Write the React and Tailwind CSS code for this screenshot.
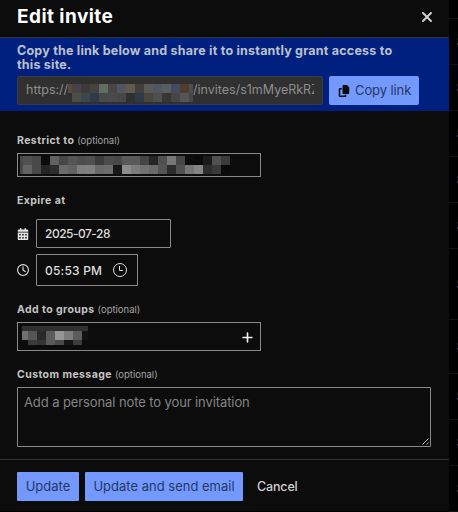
import { FaCalendarDays, FaCopy, FaPlus, FaRegClock, FaXmark } from "react-icons/fa6";

const linkTiles = [
  ["#5a4838", "#454545", "#3f3a39", "#44433f", "#616c63", "#494543", "#50555f", "#605a4e", "#423e3c", "#585b54", "#52565e", "#566062", "#434c5d", "#533b2d", "#4d4e4e"],
  ["#303030", "#4a4f43", "#3b464d", "#2e3a49", "#484949", "#494a4a", "#474747", "#302f2f", "#2e3a48", "#49463c", "#4c5051", "#3a3432", "#464646", "#555556", "#464646"],
];

const restrictTiles = [
  ["#484848", "#515151", "#484848", "#0b0b0b", "#606060", "#474747", "#555555", "#4d4d4d", "#505050", "#3c3c3c", "#4c4c4c", "#484848", "#5a5a5a", "#5a5a5a", "#454545", "#252525", "#505050", "#777777", "#464646", "#0d0d0d", "#0a0a0a", "#1b1b1b", "#515151", "#3b3b3b"],
  ["#484848", "#646464", "#4a4a4a", "#252525", "#2d2d2d", "#6b6b6b", "#626262", "#7e7e7e", "#808080", "#696969", "#6c6c6c", "#171717", "#8c8c8c", "#7c7c7c", "#727272", "#6a6a6a", "#545454", "#2c2c2c", "#505050", "#757575", "#858585", "#2d2d2d", "#393939", "#0a0a0a"],
];

const groupTiles = [
  ["#707070", "#555555", "#292929", "#5c5c5c", "#969696", "#7c7c7c", "#5c5c5c", "#121212"],
  ["#0c0c0c", "#3b3b3b", "#353535", "#5a5a5a", "#4a4a4a", "#171717", "#3c3c3c", "#0c0c0c"],
];

// row heights of the dimmed list behind the modal
const backdropRows = [19, 46, 46, 46, 46, 46, 71, 54, 46, 46, 46];

function Tiles({ rows, first, last = 9, heights }) {
  return (
    <div className="shrink-0">
      {rows.map((row, y) => (
        <div key={y} className="flex">
          {row.map((color, x) => (
            <div
              key={x}
              style={{
                backgroundColor: color,
                height: heights[y],
                width: x === 0 ? first : x === row.length - 1 ? last : 9,
              }}
            />
          ))}
        </div>
      ))}
    </div>
  );
}

function Label({ children, optional = true }) {
  return (
    <div className="flex h-[14px] items-center whitespace-nowrap text-[10.5px] leading-[14px]">
      <span className="font-bold tracking-[0.04em] text-[#c4c4c4]">{children}</span>
      {optional && (
        <span className="ml-[3px] text-[9.5px] text-[#a5a5a5]">(optional)</span>
      )}
    </div>
  );
}

function App() {
  return (
    <div className="flex h-[512px] w-[458px] overflow-hidden bg-black font-['Inter',sans-serif]">
      <div className="flex h-[511px] w-[449px] flex-col bg-[#0c0c0c]">
        <header className="flex h-[38px] items-center justify-between border-b border-[#30343a] pr-[14px] pl-[17px]">
          <h1 className="mt-[-3px] text-[19px] leading-[24px] font-bold tracking-[0.45px] text-white">
            Edit invite
          </h1>
          <FaXmark className="mt-[-4px] size-[16px] text-[#d0d0d0]" />
        </header>

        <section className="h-[73px] bg-[#00207f] px-[17px] pt-[6px]">
          <p className="text-[12.5px] leading-[14px] font-bold tracking-[0.22px] whitespace-nowrap text-[#bcc0cc]">
            Copy the link below and share it to instantly grant access to
            <br />
            this site.
          </p>
          <div className="mt-[4px] flex gap-[6px]">
            <div className="flex h-[29px] w-[306px] items-center rounded-[2px] border border-[#3c3c3c] bg-[#303030] px-[8px] text-[12.5px] text-[#8e8e8e]">
              <span className="w-[42px] shrink-0">https://</span>
              <div className="mt-[5px]">
                <Tiles rows={linkTiles} first={4} last={4} heights={[9, 9]} />
              </div>
              <span className="w-[121px] overflow-hidden whitespace-nowrap">
                /invites/s1mMyeRkRZ
              </span>
            </div>
            <button className="flex h-[29px] w-[90px] items-center rounded-[2px] bg-[#7399ff] pl-[9px] text-[13px] tracking-[-0.1px] whitespace-nowrap text-[#26385f]">
              <FaCopy className="mr-[5px] size-[12px] text-[#0c0c0c]" />
              Copy link
            </button>
          </div>
        </section>

        <main className="h-[348px] px-[17px] pt-[23px]">
          <Label>Restrict to</Label>
          <div className="mt-[5px] h-[24px] w-[244px] border border-[#8a8a8a] pt-[2px] pl-[2px]">
            <Tiles rows={restrictTiles} first={3} heights={[9, 9]} />
          </div>

          <div className="mt-[17px]">
            <Label optional={false}>Expire at</Label>
          </div>
          <div className="mt-[11px] flex items-center">
            <FaCalendarDays className="mr-[7px] size-[12px] text-[#e5e5e5]" />
            <div className="flex h-[29px] w-[135px] items-center rounded-[1px] border border-[#8a8a8a] pl-[8px] text-[12px] font-medium tracking-[-0.5px] text-[#dedede]">
              2025-07-28
            </div>
          </div>
          <div className="mt-[6px] flex items-center">
            <FaRegClock className="mr-[7px] size-[12px] text-[#e0e0e0]" />
            <div className="flex h-[32px] w-[102px] items-center rounded-[1px] border border-[#8a8a8a] pl-[8px] text-[12px] font-medium tracking-[0.2px] whitespace-nowrap text-[#dedede]">
              <span className="w-[68px] pt-[1px]">05:53 PM</span>
              <svg className="size-[14px]" viewBox="0 0 14 14" fill="none" stroke="#e0e0e0">
                <circle cx="7" cy="7" r="6.5" />
                <path d="M6.5 3v4.5h3.5" />
              </svg>
            </div>
          </div>

          <div className="mt-[17px]">
            <Label>Add to groups</Label>
          </div>
          <div className="mt-[5px] flex h-[29px] w-[244px] justify-between border border-[#8a8a8a] pt-[3px] pr-[6px] pl-[4px]">
            <div>
              <div className="h-[5px] w-[66px] bg-[#303030]" />
              <Tiles rows={groupTiles} first={6} last={6} heights={[9, 5]} />
            </div>
            <FaPlus className="mt-[5px] size-[13px] text-[#f0f0f0]" />
          </div>

          <div className="mt-[17px]">
            <Label>Custom message</Label>
          </div>
          <div className="relative mt-[5px] h-[60px] w-[414px] rounded-[1px] border border-[#8a8a8a] pt-[6px] pl-[6px] text-[13px] leading-[16px] tracking-[-0.1px] text-[#858585]">
            Add a personal note to your invitation
            <svg className="absolute right-[1px] bottom-[1px] size-[7px]" viewBox="0 0 7 7" stroke="#b5b5b5">
              <path d="M0.5 6.5l6-6M4.5 6.5l2-2" />
            </svg>
          </div>
        </main>

        <footer className="flex h-[52px] items-start border-t border-[#373737] pt-[12px] pl-[17px] text-[13px] whitespace-nowrap">
          <button className="h-[29px] w-[62px] rounded-[1px] bg-[#7399ff] text-[#26385f]">
            Update
          </button>
          <button className="ml-[6px] h-[29px] w-[158px] rounded-[1px] bg-[#7399ff] text-[#26385f]">
            Update and send email
          </button>
          <button className="ml-[14px] h-[29px] pt-[2px] text-[12.5px] font-medium tracking-[-0.15px] text-[#d0d0d0]">
            Cancel
          </button>
        </footer>
      </div>

      <div className="w-[9px]">
        {backdropRows.map((height, i) => (
          <div
            key={i}
            className="flex items-center justify-end border-b border-[#121212]"
            style={{ height }}
          >
            {i > 0 && (
              <div>
                <div className="mb-[3px] h-[2px] w-px bg-[#0c1a20]" />
                <div className="h-[2px] w-px bg-[#30305a]" />
              </div>
            )}
          </div>
        ))}
      </div>
    </div>
  );
}

export default App;
